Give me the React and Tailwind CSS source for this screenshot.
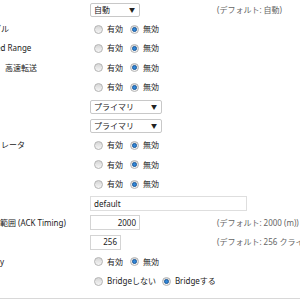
const font = { fontFamily: '"Noto Sans", "Noto Sans CJK JP", sans-serif' };

function Radio({ checked, label }) {
  return (
    <span className="flex items-center shrink-0">
      <span className="flex items-center justify-center w-[9px] h-[9px] rounded-full border border-[#b4b4b4] bg-linear-to-b from-[#d6d6d6] to-[#f6f6f6]">
        {checked && <span className="w-[5px] h-[5px] rounded-full bg-[#2f86d8] border border-[#1d5a9a]" />}
      </span>
      <span className="ml-[4px] text-[#222]">{label}</span>
    </span>
  );
}

function OnOff() {
  return (
    <div className="flex items-center gap-[7px] pl-[4px]">
      <Radio label="有効" />
      <Radio checked label="無効" />
    </div>
  );
}

function Select({ value, w }) {
  return (
    <div className={`flex items-center justify-between h-[14px] shrink-0 border border-[#c8c8c8] rounded-[2px] bg-white pl-[3px] pr-[4px] ${w}`}>
      <span className="text-[#222]">{value}</span>
      <span className="text-[6px] leading-none text-[#222]">▼</span>
    </div>
  );
}

function Row({ label, labelClass = '', children, note }) {
  return (
    <div className="grid grid-cols-[90px_127px_1fr] items-center h-[19.4px]">
      <div className={`whitespace-nowrap text-[#222] ${labelClass}`}>{label}</div>
      <div className="flex items-center">{children}</div>
      <div className="whitespace-nowrap text-[#666]">{note}</div>
    </div>
  );
}

export default function App() {
  return (
    <div className="w-[300px] h-[300px] overflow-hidden bg-white text-[8px] leading-none" style={font}>
      <div className="flex flex-col pt-0">
        <Row note="(デフォルト: 自動)">
          <Select value="自動" w="w-[50px]" />
        </Row>
        <Row label="ブル" labelClass="-ml-[7px]"><OnOff /></Row>
        <Row label="ed Range" labelClass="-ml-[4px]"><OnOff /></Row>
        <Row label="高速転送" labelClass="ml-[5px]"><OnOff /></Row>
        <Row><OnOff /></Row>
        <Row><Select value="プライマリ" w="w-[72px]" /></Row>
        <Row><Select value="プライマリ" w="w-[72px]" /></Row>
        <Row label="レータ" labelClass="ml-[1px]"><OnOff /></Row>
        <Row><OnOff /></Row>
        <Row><OnOff /></Row>
        <Row>
          <div className="h-[15px] w-[157px] shrink-0 border border-[#dedede] flex items-center px-[3px] text-[#222]">default</div>
        </Row>
        <Row label="範囲 (ACK Timing)" note="(デフォルト: 2000 (m))">
          <div className="h-[15px] w-[50px] shrink-0 border border-[#d4d4d4] flex items-center justify-end px-[3px] text-[#222]">2000</div>
        </Row>
        <Row note="(デフォルト: 256 クライアント)">
          <div className="h-[15px] w-[31px] shrink-0 border border-[#d4d4d4] flex items-center justify-end px-[3px] text-[#222]">256</div>
        </Row>
        <Row label="y"><OnOff /></Row>
        <Row>
          <div className="flex items-center gap-[6px] pl-[4px] whitespace-nowrap">
            <Radio label="Bridgeしない" />
            <Radio checked label="Bridgeする" />
          </div>
        </Row>
      </div>
      <div className="mt-[7px] border-t border-[#d8d8d8]" />
    </div>
  );
}
